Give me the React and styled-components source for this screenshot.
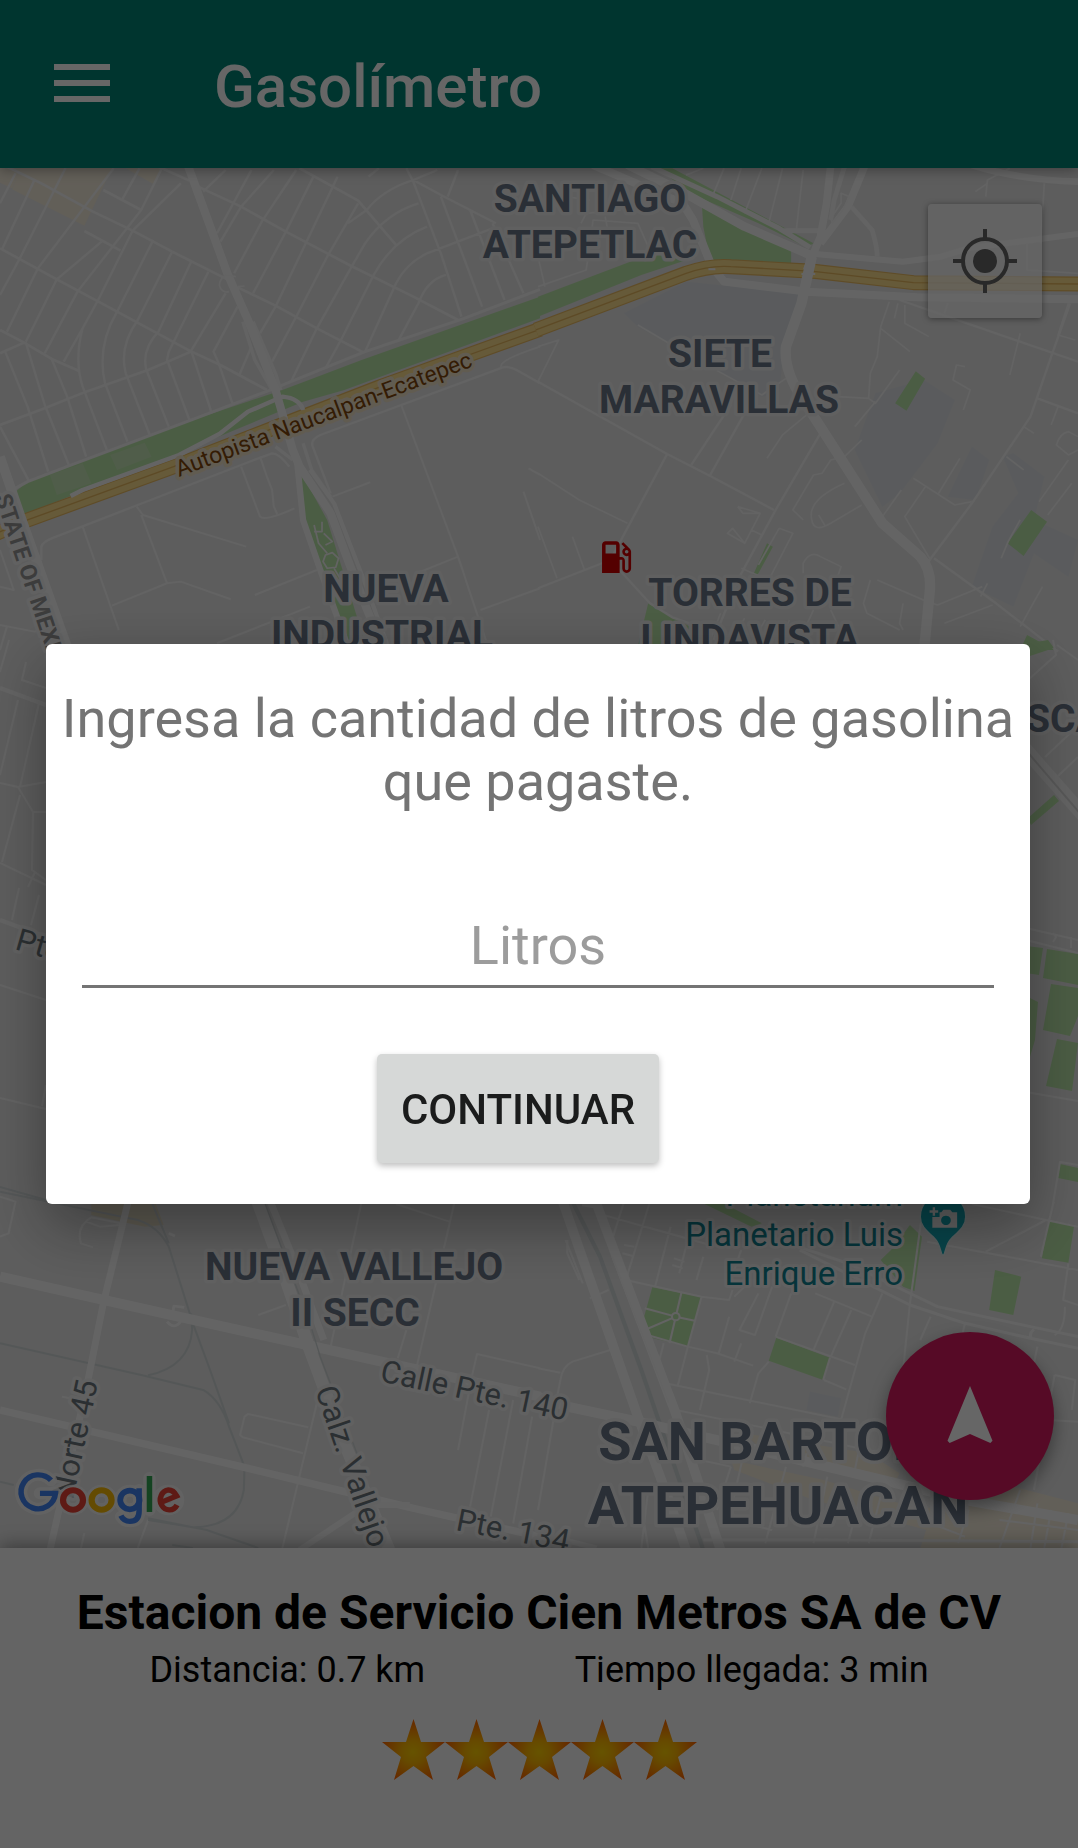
import React from 'react';
import styled, { createGlobalStyle } from 'styled-components';

const GlobalStyle = createGlobalStyle`
  *, *::before, *::after { box-sizing: border-box; }
  body { margin: 0; font-family: Roboto, "Liberation Sans", sans-serif; }
  button, input { font-family: inherit; }
  h1, h2, p { margin: 0; }
`;

const Screen = styled.div`
  display: flex;
  flex-direction: column;
  min-height: 100vh;
  background: #fafafa;
`;

const TopBar = styled.header`
  display: flex;
  align-items: center;
  gap: 104px;
  height: 168px;
  padding: 0 54px 2px;
  background: #008577;
  color: #fff;
  box-shadow: 0 2px 12px rgba(0, 0, 0, 0.35);
  z-index: 1;
`;

const MenuButton = styled.button`
  display: flex;
  padding: 0;
  border: 0;
  background: none;
  color: inherit;
`;

const Title = styled.h1`
  padding-top: 8px;
  font-size: 60px;
  line-height: 70px;
  font-weight: 500;
`;

const MapArea = styled.main`
  position: relative;
  flex: 1 1 0;
  min-height: 600px;
  overflow: hidden;
  background: #e8e8e8;
`;

const MapCanvas = styled.svg`
  position: absolute;
  inset: 0;
  width: 100%;
  height: 100%;
  fill: none;
  font-family: Roboto, "Liberation Sans", sans-serif;
`;

const PlaceLabel = styled.text`
  font-size: ${(p) => p.$size || 39}px;
  font-weight: 700;
  fill: #697587;
  stroke: #f0f0f0;
  stroke-width: 7px;
  stroke-linejoin: round;
  paint-order: stroke;
  text-anchor: ${(p) => p.$anchor || 'middle'};
`;

const RoadLabel = styled.text`
  font-size: ${(p) => p.$size || 31}px;
  font-weight: ${(p) => p.$weight || 400};
  fill: ${(p) => p.$color || '#6c777d'};
  stroke: ${(p) => p.$halo || '#f3f3f3'};
  stroke-width: 7px;
  stroke-linejoin: round;
  paint-order: stroke;
`;

const PoiLabel = styled.text`
  font-size: 33px;
  fill: #0f8291;
  stroke: #f3f3f3;
  stroke-width: 6px;
  stroke-linejoin: round;
  paint-order: stroke;
  text-anchor: end;
`;

const LocateButton = styled.button`
  position: absolute;
  top: 36px;
  right: 36px;
  display: flex;
  align-items: center;
  justify-content: center;
  width: 114px;
  height: 114px;
  padding: 0;
  border: 0;
  border-radius: 4px;
  background: rgba(255, 255, 255, 0.7);
  color: #666;
  box-shadow: 0 1px 6px rgba(0, 0, 0, 0.4);
`;

const NavigateButton = styled.button`
  position: absolute;
  right: 24px;
  bottom: 48px;
  display: flex;
  align-items: center;
  justify-content: center;
  width: 168px;
  height: 168px;
  padding: 0;
  border: 0;
  border-radius: 50%;
  background: #d81b60;
  color: #fff;
  box-shadow: 0 8px 18px rgba(0, 0, 0, 0.4);
`;

const StationSheet = styled.section`
  display: flex;
  flex-direction: column;
  align-items: center;
  padding: 37px 24px 68px;
  background: #fafafa;
  color: #000;
  box-shadow: 0 -2px 18px rgba(0, 0, 0, 0.4);
  z-index: 1;
`;

const StationName = styled.h2`
  font-size: 48px;
  line-height: 56px;
  font-weight: 700;
  text-align: center;
`;

const StationFacts = styled.div`
  display: flex;
  justify-content: space-evenly;
  align-self: stretch;
  margin: 8px -24px 28px;
  font-size: 36px;
  line-height: 42px;
`;

const Rating = styled.div`
  display: flex;
`;

const Backdrop = styled.div`
  position: fixed;
  inset: 0;
  z-index: 10;
  display: flex;
  align-items: center;
  justify-content: center;
  padding: 0 48px 0 46px;
  background: rgba(0, 0, 0, 0.6);
`;

const Dialog = styled.form`
  display: flex;
  flex-direction: column;
  width: 100%;
  padding: 43px 12px 41px;
  border-radius: 6px;
  background: #fff;
  box-shadow: 0 22px 60px rgba(0, 0, 0, 0.36);
`;

const Prompt = styled.label`
  color: #747474;
  font-size: 54px;
  line-height: 63px;
  text-align: center;
`;

const LitresInput = styled.input`
  height: 75px;
  min-width: 0;
  margin: 100px 24px 66px;
  padding: 0 0 7px;
  border: 0;
  border-bottom: 3px solid #747474;
  border-radius: 0;
  outline: 0;
  background: none;
  color: #212121;
  font-size: 54px;
  line-height: 63px;
  text-align: center;

  &::placeholder { color: #9c9c9c; opacity: 1; }
`;

const ContinueButton = styled.button`
  align-self: center;
  height: 109px;
  margin-right: 40px;
  padding: 2px 24px 0;
  border: 0;
  border-radius: 5px;
  background: #d6d8d7;
  color: #1b1c1c;
  font-size: 42px;
  line-height: 50px;
  font-weight: 500;
  box-shadow: 0 3px 6px rgba(0, 0, 0, 0.25);
`;

const ROAD = '#f7f7f7';
const AVENUE = '#fbfbfb';
const PARK = '#bce8aa';
const CAMPUS = '#e0e4e9';
const COMMERCE = '#f5eddc';
const RAIL = '#d3d9da';

/* Each map section has its own drawing grid, with its origin at x, y. */
const Section = ({ x, y, children }) => (
  <g transform={`translate(${x} ${y}) scale(0.3444 0.3333)`} strokeLinejoin="round">
    {children}
  </g>
);

const Street = ({ d, w = 7, color = ROAD }) => (
  <path d={d} stroke={color} strokeWidth={w} strokeLinejoin="round" />
);

const Area = ({ d, color = PARK }) => <path d={d} fill={color} />;

const Highway = ({ d }) => (
  <>
    <Street d={d} w={45} color="#edbe64" />
    <Street d={d} w={38} color="#ffe08e" />
    <Street d={d} w={4} color="#e8b95f" />
  </>
);

const NorthWest = () => (
  <Section x={0} y={160}>
    <Area color={COMMERCE} d="M0 25H60L35 85L0 68ZM60 25H325L245 197L35 88ZM365 25H475L445 72Z" />
    <Street
      w={8}
      d="M0 10L120 70L270 155L385 212L500 275L660 358M690 382L800 437L920 505L1055 577M575 80L700 140L830 215L1020 318L1200 410L1330 480M0 265L165 358L340 455L550 572L640 615L775 690M0 510L70 548L150 597L230 633M870 25L1040 122L1150 255M300 90L410 150M245 213L350 272M460 20L550 62M0 795L130 745L250 695L430 630L555 575M0 580L70 548"
    />
    <Street
      d="M45 40L0 130M100 60L5 270M190 25L55 300L0 405M330 25L110 325L20 515M295 245L165 358L75 545M405 25L355 118M470 25L410 150L225 395L130 580M525 70L385 212L285 420L240 505L185 605M240 505Q215 600 240 680L310 870M445 240L340 455Q280 560 305 670L370 845M500 275L400 480Q345 560 365 640L435 825M555 305L460 515Q410 570 425 630L490 800M605 335L490 575L485 600L550 780M150 597L195 710L250 890M655 400L555 572L615 760M690 440L620 575L635 610L675 730M15 575L80 740L140 935M75 548L130 735L200 915M0 800L85 965M730 560L695 645"
    />
    <Street
      d="M655 30L590 95M730 30L630 220M795 30L700 140L640 245M860 30L760 185L680 340M910 50L830 215L735 400M980 50L890 245L800 440L755 520M1040 130L950 290L860 470L790 605M1215 130Q1120 160 1060 250L1010 340L920 505L845 665M1240 200Q1140 240 1085 345L990 540L945 625M1430 205L1240 280Q1180 310 1150 370L1060 575M1295 345Q1240 360 1215 430L1155 545M1180 25L1200 65L1280 280L1340 470M1280 110L1400 440M1365 150L1465 420M1430 190L1520 400M1200 60L1290 110L1365 150L1440 190M1270 30L1200 60Q1110 90 1065 150L1010 190M1070 50L1100 25M1330 30L1300 110"
    />
    <Area d="M45 995L80 965L200 918L560 780L820 690L1050 600L1568 410V475L1000 690L880 725L600 845L510 885L200 1010L70 1065Z" />
    <Area color="#c8e9b9" d="M145 945L240 910L265 970L165 1005ZM320 885L420 848L440 890L340 930Z" />
    <Street w={9} d="M0 1010L80 965L200 918L560 778L780 692L1060 575L1340 478L1568 388" />
    <Street
      d="M240 1100L345 1410M397 1040L415 1065L715 1160M410 1065L485 1270L325 1337M485 1270L525 1265L670 1318M700 920L755 1070Q770 1085 855 1045M755 890L775 950L790 990L795 1040L805 1062M1165 735L1330 1190L1420 1470M1210 1240L1330 1190M740 1305L920 1230M630 1450L900 1340M1395 1350L1568 1285M1535 925L1568 945M1520 995L1568 1140M965 1010L1075 967M0 1170L40 1290L0 1280M20 1400L0 1470M0 1395L100 1415L150 1400M140 1280L110 1180M1455 620Q1450 600 1568 560"
      w={6}
    />
    <Street d="M120 1200V1160Q125 1145 150 1135L400 1035L700 915L790 880Q810 880 840 920M960 1000L908 860Q900 840 930 825L1460 622Q1480 618 1500 630L1568 670" />
    <Highway d="M-10 1120L80 1080L510 918L830 790L1100 682L1568 508" />
    <Street w={13} color={AVENUE} d="M205 1008L240 990L520 885L640 820L720 755L820 710Q870 715 880 750" />
    <Street w={10} d="M705 485L740 600L790 690M735 485L800 640L815 690M800 860L850 900M880 850L905 930L960 1010" />
    <Area d="M870 930L950 1080L1060 1450H1000L960 1330L885 1080Z" />
    <Street w={24} color={AVENUE} d="M545 15L660 340L720 480L800 690L850 870L870 920L960 1060L1010 1200L1070 1360L1120 1480" />
    <Street w={18} color={AVENUE} d="M862 900L880 1080L930 1230L1010 1460" />
    <Street w={12} color={AVENUE} d="M900 930L970 1030L1060 1270L1130 1470" />
    <Street w={5} d="M935 1085V1115H912M912 1095L925 1150L950 1180M940 1120L965 1145L945 1155M945 1185L965 1178L983 1195L975 1222L950 1225L938 1205ZM970 1225L990 1260" />
    <Street w={5} d="M685 350L655 345Q630 365 640 385Q650 400 665 395M690 380L710 378" />
    <Street w={28} color={AVENUE} d="M0 890L60 1070L205 1490" />
  </Section>
);

const NorthEast = () => (
  <Section x={538} y={160}>
    <Area color={CAMPUS} d="M250 460L430 365L760 400L710 600L700 700L650 710L520 630L290 500ZM1120 660L1210 720L1160 850L1050 1000L1000 1040L920 870L980 700ZM1260 860L1310 900L1270 1020L1190 1010ZM1380 880L1470 950L1440 1080L1568 1140L1540 1250L1440 1180L1380 1340L1260 1280L1320 1100L1395 1000L1350 890Z" />
    <Area d="M0 410L345 275L460 290L300 345L0 470ZM475 120L600 200L735 270V312L500 305L480 200ZM350 25H390L600 140L800 250L780 262L640 190L440 100ZM1097 634L1124 656L1070 752L1037 730ZM1432 1050L1478 1085L1410 1188L1363 1150ZM320 1330L440 1400L520 1480H285ZM665 1150L682 1160L640 1240L610 1280ZM1420 1425L1500 1470H1400Z" />
    <Street
      d="M0 665L375 882L500 948L685 1050M560 735L445 915M600 760L500 945M375 882L210 1200L325 1330L390 1372L440 1390M0 1285L210 1200M820 820L690 1050L580 1260L510 1440M1050 420L1568 605M1545 430L1490 590L1430 770L1260 1030L1130 1210M1150 1195L1330 1330L1510 1475M1450 715L1568 760"
    />
    <Street
      w={5}
      d="M0 940L120 1020L260 1090M720 655L650 705L520 632M780 765L710 825L665 895M890 970Q780 1020 795 1080Q800 1120 850 1090L940 1035M1020 425L995 500L985 590L965 640L960 715L870 710M995 505L1080 575M960 715L980 730L1050 630M980 725L920 800M940 840L890 890L850 900L825 940L800 945L740 1050L770 1080M1090 955L1210 1035L1260 1025M1125 980L1065 1070L1140 1200M1225 895L1160 1005M1360 890L1410 930M1240 620L1215 615L1205 660L1255 690L1235 750M1065 435V490L1135 530M1045 430L1035 475M985 1260L1130 1325L1160 1335L1290 1280M965 1260L945 1330L955 1360L1050 1410M700 1105L740 1120L670 1260L590 1225M700 1105L640 1215M770 1240V1210Q790 1170 820 1190L880 1220L870 1250M580 1040L645 1060L600 1150L550 1120L565 1105L600 1150M580 1040L595 1060L645 1060M620 1110L650 1125M815 1065L835 1100M290 495L380 550L420 550M0 665L60 540L0 560M100 1130L135 1230M0 1100L55 1255M1055 990L1000 1070M1410 800L1440 820M1540 430L1510 525L1560 540M1400 520L1370 645M1510 740L1490 795M1568 830L1540 815Q1515 820 1505 855L1540 885L1568 870M1540 900L1455 1025M1550 970L1480 1065M1400 1080L1365 1145L1345 1195M1305 1270L1285 1310M1465 1280L1400 1400M1060 1330L1050 1390L1060 1410M1180 1390L1320 1335M530 1360L500 1440M600 1375L560 1440M660 1380L620 1450M730 1380L700 1450M800 1350L760 1440M850 1350L900 1460"
    />
    <Street w={5} d="M480 25L430 45M540 25L510 100M590 25L560 120M650 25L600 160M710 25L670 190M770 30L750 210M0 380L140 330L160 180L290 190L320 260M125 190L140 160L240 150M195 170L210 250M0 290L20 380M0 150L80 110L150 120M1300 110L1305 60L1370 25M1305 70L1270 95M1470 70L1460 250M1420 250V330L1568 340M1190 430L1180 460" />
    <Street w={24} color={AVENUE} d="M160 15L420 130L450 180L505 320L540 365L780 395L1100 412L1568 418" />
    <Street w={15} d="M330 20L520 110L700 205L790 262M710 212H820" />
    <Street w={26} color={AVENUE} d="M260 15L400 85L600 200L790 285" />
    <Highway d="M-6 510L430 340Q500 315 560 320L800 334L1090 368L1568 372" />
    <Street w={18} color={AVENUE} d="M780 280L1060 305L1170 290L1250 265L1568 222" />
    <Street w={22} color={AVENUE} d="M850 15L838 130L820 230L780 330M950 15L900 140L820 250" />
    <Street w={14} d="M890 20L860 120L850 180M910 140L970 210Q985 260 985 290" />
    <Street w={5} d="M880 100L905 110L885 150L855 190L850 175L880 130Z" />
    <Street w={30} color={AVENUE} d="M795 290L765 430L720 560Q712 630 770 720L1000 1090L1110 1190Q1145 1230 1137 1300L1120 1480" />
    <Street w={20} color={AVENUE} d="M1260 15Q1400 60 1568 65" />
    <Street w={6} color={AVENUE} d="M765 342H805M495 328H515" />
  </Section>
);

const SouthWest = () => (
  <Section x={0} y={1190}>
    <Area color="#e9e1c9" d="M265 35H450L475 105L420 110L265 75Z" />
    <Street
      w={6}
      d="M1050 35L960 470M1320 35L1210 530M1150 42L1305 95M1180 420L1155 505M1568 535L1385 492L1370 560L1330 780M1420 660L1365 950M1490 630L1425 980M1545 680L1490 1000M920 640L820 1074M895 712L720 672L710 680L697 735L705 742L880 790M750 375L830 345M0 20L45 35L25 130L0 140M350 105L290 110L250 95M350 100L265 82Q220 110 235 160L270 172M430 990L400 1074M245 1030L235 1074M180 620L230 630"
    />
    <Street w={6} color={RAIL} d="M0 460L410 555L590 600Q640 630 665 710L710 830L708 900Q690 1010 560 1012L430 990M0 5L400 90Q460 110 490 170L560 400L610 540L665 700M430 556Q550 530 558 420L555 370M440 35L490 160M0 875L40 885M430 985L600 1020L750 1074M500 1065L560 1074" />
    <Street w={30} color={AVENUE} d="M0 260L300 330L890 465L1150 525L1568 620" />
    <Street w={20} color={AVENUE} d="M372 35L300 340L250 600L145 1080" />
    <Street w={36} color={AVENUE} d="M748 35L820 240L900 480L1000 760L1130 1080" />
    <Street w={20} color={AVENUE} d="M785 35L850 200L940 450" />
    <Street w={4} color={RAIL} d="M770 42L900 400L930 500L1040 800" />
    <Street w={22} color={AVENUE} d="M0 660L700 830L1000 905L1200 955L1568 1040" />
    <Street w={18} d="M870 1080L1030 970L1100 945L1190 945" />
    <Street w={8} color={AVENUE} d="M500 375L505 348L535 352M490 130L508 138M485 395Q505 420 525 395" />
  </Section>
);

const SouthEast = () => (
  <Section x={538} y={1190}>
    <Area color={COMMERCE} d="M560 810L830 870L1050 940L1240 970L1220 1045L800 930L570 840ZM600 730L960 790L1050 850L1040 870L640 770ZM1250 940L1380 890L1568 940V1074H1110L1130 1010Z" />
    <Area color={CAMPUS} d="M790 605L880 625L870 680L780 660Z" />
    <Area d="M332 292L473 320L437 470L308 438V380ZM692 443L848 503L828 570L670 512ZM1025 180L1080 105L1115 140L1093 303L1060 290L995 210ZM1327 240L1403 260L1380 375L1310 360ZM1482 92L1557 105L1540 218L1463 205ZM470 35H530L650 100L620 110Z" />
    <Street w={6} d="M417 305L400 380L382 460M310 355L400 380L455 392M400 380L310 420" />
    <circle cx="400" cy="380" r="11" fill={PARK} stroke={ROAD} strokeWidth="6" />
    <Street
      w={6}
      d="M190 75L500 165M250 35L215 150M325 35L255 270M385 110L340 290M440 130L410 250M255 270L475 320L555 330L565 300M300 430L435 470L520 490L625 527M475 320L435 470L405 590M365 460L345 540M490 495L497 540L470 660M555 380L525 490M590 460L570 515M370 580L890 690M1000 310L950 430L880 690M690 440L920 525M670 515L640 550L615 640M830 570L895 598M848 503L828 570M640 310L585 420L630 435L680 290M860 335L800 480M910 360L850 500M735 310L690 440M805 310L970 380M1120 35L1080 340L1060 540M1130 155L1568 240M1300 185L1475 90L1260 42M1475 90L1568 110M1497 35L1460 200M1540 220L1525 330L1568 345M1530 350Q1530 420 1500 435M1140 380L1110 450M1240 400L1230 440M1450 470L1440 520M1500 555L1560 570L1550 660M1500 555L1440 900M80 150L130 280M150 325L205 300M85 150V190L120 270M210 480L100 515Q70 530 65 570L50 650M0 535L65 548M45 690L0 960M1480 690L1568 695M250 165L280 170M245 190L275 198M395 205L425 215M390 225L420 235M480 200L460 270M590 180L570 240M600 290L570 320"
    />
    <Street
      w={6}
      d="M400 660L640 710L1000 790M470 810L560 830M300 950L320 1074M320 900L300 1074M560 830L520 960M600 780L560 960M720 830L660 1060M840 860L800 1060M940 900L900 1060M1000 900L960 1060M1040 960L1240 1040M780 790L770 830M880 780L860 840M930 790L920 840M1250 960L1220 1060M540 985L680 1020M1400 900L1340 1074M1450 940L1430 1074M1490 960L1470 1074M1540 970L1520 1074M1340 990L1568 1020"
    />
    <Street w={9} d="M640 130L900 220L1060 300L1160 350L1430 410L1568 440M760 180L1080 345L1240 400L1430 445L1568 475M1432 445Q1425 430 1440 418M480 1050L800 1050L1568 1055" />
    <Street w={28} color={AVENUE} d="M72 35L290 680L380 930L430 1080M130 35L170 42L400 670L530 1080" />
    <Street w={12} color={RAIL} d="M100 35L180 200L300 540L480 1080" />
    <Street w={4} d="M215 200L380 640" />
    <Street w={30} color={AVENUE} d="M0 620L85 650L290 695L600 770L800 820L1240 930L1568 990" />
    <Street w={16} d="M0 1030L170 1074" />
  </Section>
);

const WestEdge = () => (
  <>
    <Street w={2} d="M9 640L0 672M26 662L22 680L46 688M18 700L0 775M39 703L20 787M0 783L18 787L46 782M18 787L33 812H46M33 812L32 870L46 880M0 863L46 885M20 795L2 862M35 872L28 887M19 888L12 920M39 895L31 925M0 985L46 1000M0 1098L46 1109M46 1085L42 1106" />
    <Street w={4} d="M0 688L46 705M0 920L46 937" />
    <Street w={2} color={RAIL} d="M0 1187L46 1200" />
  </>
);

const EastEdge = () => (
  <>
    <Area d="M1026 946L1043 948L1039 975L1026 973ZM1047 949L1078 954V985L1043 978ZM1051 984L1078 988V1016L1070 1036L1043 1030ZM1057 1039L1078 1043L1072 1091L1046 1086ZM1026 996L1038 1002L1035 1040L1026 1070ZM1028 818L1054 795L1059 801L1031 825ZM1060 1164L1078 1168V1182L1058 1178ZM1030 643L1048 640L1054 648L1030 656Z" />
    <Street w={2} d="M1026 928L1078 940M1026 940L1078 953M1053 933L1056 937L1053 942M1071 937V948M1026 1092L1078 1101M1053 1204L1060 1162L1078 1165M1045 757L1078 726M1058 776L1078 757M1053 640L1056 655L1028 680M1057 645L1078 660" />
    <Street w={14} d="M1024 748L1084 816" />
    <Street w={2} color="#dadada" d="M1024 748L1084 818" />
  </>
);

const GoogleLogo = () => (
  <g transform="translate(0 1190) scale(0.3444 0.3333)">
    <g stroke="#f9f9f9" strokeOpacity="0.8" strokeWidth="36" strokeLinejoin="round" strokeLinecap="round">
      <path d="M148 871A50 51 0 1 0 161 910H116" />
      <circle cx="212" cy="930" r="28" />
      <circle cx="295" cy="930" r="28" />
      <circle cx="377" cy="930" r="28" />
      <path d="M404 900V965Q404 994 377 994Q360 994 352 980M434 864V960" />
      <circle cx="489" cy="930" r="28" />
    </g>
    <g strokeWidth="16">
      <path stroke="#4285f4" d="M148 871A50 51 0 1 0 161 910H116" />
      <circle cx="212" cy="930" r="29" stroke="#ea4335" strokeWidth="18" />
      <circle cx="295" cy="930" r="29" stroke="#fbbc05" strokeWidth="18" />
      <circle cx="377" cy="930" r="28" stroke="#4285f4" strokeWidth="17" />
      <path stroke="#4285f4" d="M404 895V962Q404 994 377 994Q359 994 351 977" />
      <path stroke="#34a853" d="M434 858V966" />
      <path stroke="#ea4335" d="M466 938L513 918Q504 900 489 900A26 30 0 1 0 514 945" />
    </g>
  </g>
);

const PlanetariumPin = () => (
  <g transform="translate(538 1190) scale(0.3444 0.3333)">
    <path fill="#12aab9" stroke="#e0f1f2" strokeWidth="4" d="M1176 195C1168 195 1172 165 1150 143C1128 122 1110 108 1110 80A66 68 0 0 1 1242 80C1242 108 1224 122 1202 143C1180 165 1184 195 1176 195Z" />
    <path fill="#f4f4f4" fillRule="evenodd" d="M1146 52h7v9h9v7h-9v9h-7v-9h-9v-7h9ZM1166 67h5l6-8h20l6 8h14v46h-72v-32h21ZM1184 77a14 14 0 1 0 1 0Z" />
  </g>
);

const CityMap = () => (
  <MapCanvas viewBox="0 168 1078 1380" preserveAspectRatio="xMidYMid slice" role="img" aria-label="Mapa">
    <NorthWest />
    <NorthEast />
    <WestEdge />
    <EastEdge />
    <SouthWest />
    <SouthEast />

    <RoadLabel $size={23} $color="#82460a" $halo="#f3e7cb" transform="translate(179 477) rotate(-20.6)">Autopista Naucalpan-Ecatepec</RoadLabel>
    <RoadLabel $size={23} $weight={700} $color="#969696" transform="translate(-5 497) rotate(71.5)">STATE OF MEXICO</RoadLabel>
    <RoadLabel transform="translate(14 949) rotate(16)">Pte. 152</RoadLabel>
    <RoadLabel transform="translate(73 1500) rotate(-78)">Norte 45</RoadLabel>
    <RoadLabel transform="translate(379 1381) rotate(12)">Calle Pte. 140</RoadLabel>
    <RoadLabel transform="translate(455 1530) rotate(11)">Pte. 134</RoadLabel>
    <RoadLabel transform="translate(315 1390) rotate(71)">Calz. Vallejo</RoadLabel>

    <PlaceLabel x="590" y="212">SANTIAGO</PlaceLabel>
    <PlaceLabel x="590" y="258">ATEPETLAC</PlaceLabel>
    <PlaceLabel x="720" y="367">SIETE</PlaceLabel>
    <PlaceLabel x="719" y="413">MARAVILLAS</PlaceLabel>
    <PlaceLabel x="386" y="602">NUEVA</PlaceLabel>
    <PlaceLabel x="382" y="648">INDUSTRIAL</PlaceLabel>
    <PlaceLabel x="750" y="606">TORRES DE</PlaceLabel>
    <PlaceLabel x="750" y="652">LINDAVISTA</PlaceLabel>
    <PlaceLabel x="1026" y="732" $anchor="start">SCA</PlaceLabel>
    <PlaceLabel x="354" y="1280">NUEVA VALLEJO</PlaceLabel>
    <PlaceLabel x="355" y="1326">II SECC</PlaceLabel>
    <PlaceLabel x="778" y="1460" $size={54}>SAN BARTOLO</PlaceLabel>
    <PlaceLabel x="778" y="1524" $size={54}>ATEPEHUACAN</PlaceLabel>

    <PoiLabel x="903" y="1206">Planetarium</PoiLabel>
    <PoiLabel x="903" y="1246">Planetario Luis</PoiLabel>
    <PoiLabel x="903" y="1285">Enrique Erro</PoiLabel>
    <PlanetariumPin />

    <path
      transform="translate(595 536) scale(1.76)"
      fill="#d20000"
      d="M19.77 7.23l.01-.01-3.72-3.72L15 4.56l2.11 2.11c-.94.36-1.61 1.26-1.61 2.33 0 1.38 1.12 2.5 2.5 2.5.36 0 .69-.08 1-.21v7.21c0 .55-.45 1-1 1s-1-.45-1-1V14c0-1.1-.9-2-2-2h-1V5c0-1.1-.9-2-2-2H6c-1.1 0-2 .9-2 2v16h10v-7.5h1.5v5c0 1.38 1.12 2.5 2.5 2.5s2.5-1.12 2.5-2.5V9c0-.69-.28-1.32-.73-1.77zM12 10H6V5h6v5zm6 0c-.55 0-1-.45-1-1s.45-1 1-1 1 .45 1 1-.45 1-1 1z"
    />
    <GoogleLogo />
  </MapCanvas>
);

const MenuIcon = () => (
  <svg width="56" height="38" viewBox="0 0 56 38" fill="currentColor" aria-hidden="true">
    <path d="M0 0h56v6H0zM0 16h56v6H0zM0 32h56v6H0z" />
  </svg>
);

const LocateIcon = () => (
  <svg width="64" height="64" viewBox="0 0 64 64" fill="none" stroke="currentColor" strokeWidth="4" aria-hidden="true">
    <circle cx="32" cy="32" r="22" />
    <circle cx="32" cy="32" r="12" fill="currentColor" stroke="none" />
    <path d="M32 0v9M32 55v9M0 32h9M55 32h9" />
  </svg>
);

const NavigateIcon = () => (
  <svg width="72" height="72" viewBox="0 0 24 24" fill="currentColor" aria-hidden="true">
    <path d="M12 2L4.5 20.29l.71.71L12 18l6.79 3 .71-.71z" />
  </svg>
);

const Star = () => (
  <svg width="63" height="61" viewBox="0 0 63 61" aria-hidden="true">
    <defs>
      <radialGradient id="starFill" gradientUnits="userSpaceOnUse" cx="31" cy="33" r="32">
        <stop offset="0" stopColor="#ffd000" />
        <stop offset="0.35" stopColor="#ffb800" />
        <stop offset="1" stopColor="#ff6600" />
      </radialGradient>
    </defs>
    <path fill="url(#starFill)" d="M31.5 0L39 23H63L44 38L51 61L31.5 47L12 61L19 38L0 23H24Z" />
  </svg>
);

export default function App() {
  return (
    <>
      <GlobalStyle />
      <Screen>
        <TopBar>
          <MenuButton type="button" aria-label="Menú">
            <MenuIcon />
          </MenuButton>
          <Title>Gasolímetro</Title>
        </TopBar>
        <MapArea>
          <CityMap />
          <LocateButton type="button" aria-label="Mi ubicación">
            <LocateIcon />
          </LocateButton>
          <NavigateButton type="button" aria-label="Navegar">
            <NavigateIcon />
          </NavigateButton>
        </MapArea>
        <StationSheet>
          <StationName>Estacion de Servicio Cien Metros SA de CV</StationName>
          <StationFacts>
            <p>Distancia: 0.7 km</p>
            <p>Tiempo llegada: 3 min</p>
          </StationFacts>
          <Rating role="img" aria-label="5 de 5 estrellas">
            {[1, 2, 3, 4, 5].map((n) => (
              <Star key={n} />
            ))}
          </Rating>
        </StationSheet>
      </Screen>
      <Backdrop>
        <Dialog role="dialog" aria-modal="true" onSubmit={(e) => e.preventDefault()}>
          <Prompt htmlFor="litros">Ingresa la cantidad de litros de gasolina que pagaste.</Prompt>
          <LitresInput id="litros" inputMode="decimal" placeholder="Litros" />
          <ContinueButton type="submit">CONTINUAR</ContinueButton>
        </Dialog>
      </Backdrop>
    </>
  );
}
